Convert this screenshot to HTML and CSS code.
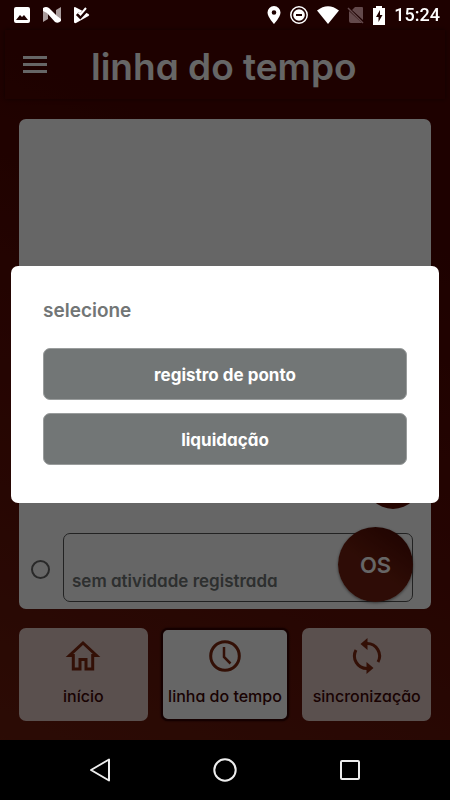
FILE: index.html
```html
<!DOCTYPE html>
<html lang="pt-BR">
<head>
<meta charset="utf-8">
<meta name="viewport" content="width=device-width, initial-scale=1">
<title>linha do tempo</title>
<link rel="stylesheet" href="styles.css">
</head>
<body>
<div class="status">
  <div class="status-group">
    <svg width="18" height="18" viewBox="0 0 18 18"><path fill="#fff" fill-rule="evenodd" d="M3 1h12q2 0 2 2v12q0 2-2 2H3q-2 0-2-2V3q0-2 2-2zM3 14h12l-4-5-2 2-2-2z"/></svg>
    <svg width="20" height="18" viewBox="0 0 20 18"><path fill="#a89b9b" d="M1 2v14l5-3V5zM19 1v14l-5-1V4z"/><path fill="#fff" d="M1 2q3-2 6 0l8 8 4 3v2q-3 3-6 1L5 7 1 5z"/></svg>
    <svg width="18" height="18" viewBox="0 0 18 18"><path fill="#fff" d="M1 2q0-1.500 1.500-.8L15.500 8q1.500 1 0 2L3 17q-2 .5-2-1z"/><path fill="none" stroke="#1c0000" stroke-width="4.500" d="M4.500 7.500l2.800 2.800L15 2"/><path fill="none" stroke="#fff" stroke-width="2" d="M5.500 6.500L7.500 8.500 13 2"/></svg>
  </div>
  <div class="status-group status-right">
    <svg width="14" height="18" viewBox="0 0 14 18"><path fill="#fff" fill-rule="evenodd" d="M7 0a6.500 6.500 0 0 1 6.500 6.500C13.500 11 7 18 7 18S.5 11 .5 6.500A6.500 6.500 0 0 1 7 0zm0 4.200a2.300 2.300 0 1 0 0 4.600 2.300 2.300 0 0 0 0-4.600z"/></svg>
    <svg width="20" height="18" viewBox="0 0 20 18"><circle cx="10" cy="9" r="8.200" fill="none" stroke="#fff" stroke-width="1.500"/><circle cx="10" cy="9" r="5.800" fill="#fff"/><path stroke="#1c0000" stroke-width="2" d="M7 9h6"/></svg>
    <svg width="22" height="18" viewBox="0 0 22 18"><path fill="#fff" d="M0 4.500Q11-4 22 4.500L11 18z"/></svg>
    <svg width="18" height="18" viewBox="0 0 18 18"><path fill="#63494b" d="M8 1h7q1 0 1 1v12L5 4zM2 5l13 12H4q-2 0-2-2z"/><path stroke="#63494b" stroke-width="1.500" d="M1 2l15 15"/></svg>
    <svg width="12" height="19" viewBox="0 0 12 19"><path fill="#fff" fill-rule="evenodd" d="M3 0h6v2h3v17H0V2h3zM7 4l-4 7h2.500v5l4-7H7z"/></svg>
    <span class="clock">15:24</span>
  </div>
</div>

<header class="topbar">
  <button class="menu" type="button" aria-label="menu"><span></span><span></span><span></span></button>
  <h1>linha do tempo</h1>
</header>

<main class="timeline">
  <span class="fab"></span>
  <div class="row">
    <input type="radio" id="entry" name="entry" class="dot">
    <label class="entry" for="entry">sem atividade registrada<span class="badge">OS</span></label>
  </div>
</main>

<nav class="tabs">
  <a class="tab" href="#inicio">
    <svg width="36" height="36" viewBox="0 0 36 36"><path fill="none" stroke="#802810" stroke-width="3" d="M4.500 17.500h3.800V31H15v-9.500h6V31h6.700V17.500h3.800L18 5z"/></svg>
    <span>início</span>
  </a>
  <a class="tab tab-active" href="#linha">
    <svg width="36" height="36" viewBox="0 0 36 36"><circle cx="18" cy="18" r="14.300" fill="none" stroke="#802810" stroke-width="3"/><path fill="none" stroke="#802810" stroke-width="2.500" d="M17 9v10l6.500 6.500"/></svg>
    <span>linha do tempo</span>
  </a>
  <a class="tab" href="#sincronizacao">
    <svg width="36" height="36" viewBox="0 0 36 36"><g fill="none" stroke="#802810" stroke-width="3"><path d="M18 5.500A12.500 12.500 0 0 1 29 24"/><path d="M18 30.500A12.500 12.500 0 0 1 7 12"/></g><path fill="#802810" d="M18.500 0v12l-7-6zM17.500 24v12l7-6z"/></svg>
    <span>sincronização</span>
  </a>
</nav>

<div class="sysbar">
  <button type="button" aria-label="voltar"><svg width="26" height="26" viewBox="0 0 26 26"><path d="M22 2.500v21L4 13z"/></svg></button>
  <button type="button" aria-label="tela inicial"><svg width="26" height="26" viewBox="0 0 26 26"><circle cx="13" cy="13" r="10.700"/></svg></button>
  <button type="button" aria-label="recentes"><svg width="26" height="26" viewBox="0 0 26 26"><rect x="4" y="4" width="18" height="18" rx="1"/></svg></button>
</div>

<div class="overlay">
  <section class="dialog" role="dialog" aria-labelledby="dialog-title">
    <h2 id="dialog-title">selecione</h2>
    <button class="choice" type="button">registro de ponto</button>
    <button class="choice" type="button">liquidação</button>
  </section>
</div>
</body>
</html>
```
FILE: styles.css
```css
* { box-sizing: border-box; }

body {
  margin: 0;
  min-height: 100vh;
  display: flex;
  flex-direction: column;
  background: linear-gradient(25deg, #70200f 0%, #5f0e06 40%, #4c0400 75%);
  font-family: Inter, "Noto Sans", sans-serif;
  font-feature-settings: "cv11", "ss03";
}

button { font: inherit; font-feature-settings: inherit; border: 0; padding: 0; }
svg { display: block; overflow: visible; }

/* Icons stay bright above the dimmed page */
.status {
  position: relative;
  z-index: 3;
  height: 30px;
  padding: 0 10px 0 13px;
  display: flex;
  align-items: center;
  justify-content: space-between;
}
.status-group { display: flex; align-items: center; gap: 11px; }
.status-right { gap: 8px; }
.clock { margin-left: 1px; color: #fff; font: 500 18px/20px Roboto, sans-serif; }

.topbar {
  height: 69px;
  margin: 0 5px;
  padding: 4px 18px 0;
  display: flex;
  align-items: center;
  gap: 44px;
  box-shadow: 0 0 4px rgba(0, 0, 0, 0.5);
}
.menu {
  width: 24px;
  display: flex;
  flex-direction: column;
  gap: 4px;
  margin-bottom: 4px;
  background: none;
}
.menu span { height: 3px; background: #fff; }
h1 { margin: 0; color: #fff; font-size: 37px; font-weight: 600; line-height: 44px; white-space: nowrap; }

.timeline {
  flex: 1;
  margin: 20px 19px 19px;
  padding: 0 18px 7px 12px;
  border-radius: 7px;
  background: #fff;
  display: flex;
  flex-direction: column;
  justify-content: flex-end;
}
.fab {
  width: 56px;
  height: 56px;
  align-self: flex-end;
  margin: 0 -8px 24px 0;
  border-radius: 50%;
  background: #5c0e04;
}
.row { display: flex; align-items: center; gap: 13px; }
.dot {
  appearance: none;
  width: 19px;
  height: 19px;
  margin: 4px 0 0;
  border: 2px solid #666;
  border-radius: 50%;
}
.entry {
  position: relative;
  flex: 1;
  height: 69px;
  padding: 0 8px 9px;
  display: flex;
  align-items: flex-end;
  border: 1px solid #555;
  border-radius: 7px;
  color: #727676;
  font-size: 17px;
  font-weight: 600;
  line-height: 22px;
}
.badge {
  position: absolute;
  top: -7px;
  right: -1px;
  width: 75px;
  height: 75px;
  border-radius: 50%;
  background: linear-gradient(35deg, #74200f 45%, #480600);
  box-shadow: 0 1px 3px rgba(0, 0, 0, 0.5);
  color: #fff;
  font-size: 22px;
  line-height: 76px;
  text-align: center;
}

.tabs {
  margin: 0 19px 19px;
  display: grid;
  grid-template-columns: repeat(3, 1fr);
  gap: 13px;
}
.tab {
  height: 93px;
  padding-top: 10px;
  display: flex;
  flex-direction: column;
  align-items: center;
  gap: 11px;
  border-radius: 7px;
  background: #e1c7c3;
  color: #400606;
  font-size: 16px;
  font-weight: 500;
  line-height: 22px;
  text-decoration: none;
  white-space: nowrap;
}
.tab-active { border: 2px solid #360000; padding-top: 8px; background: #fff; box-shadow: 0 0 2px #200000; }

.sysbar {
  height: 60px;
  padding: 0 38px;
  display: grid;
  grid-template-columns: repeat(3, 1fr);
  justify-items: center;
  align-items: center;
  position: relative;
  z-index: 3;
  background: #000;
}
.sysbar button { background: none; }
.sysbar svg { fill: none; stroke: #eee; stroke-width: 2; stroke-linejoin: round; }

.overlay {
  position: fixed;
  inset: 0;
  z-index: 2;
  padding: 0 11px 31px;
  display: flex;
  align-items: center;
  background: rgba(0, 0, 0, 0.6);
}
.dialog {
  flex: 1;
  padding: 31px 32px 38px;
  display: flex;
  flex-direction: column;
  gap: 13px;
  border-radius: 7px;
  background: #fff;
}
h2 { margin: 0 0 10px; color: #727676; font-size: 19px; font-weight: 600; line-height: 28px; }
.choice {
  height: 52px;
  padding-top: 2px;
  border: 1px solid #999c9c;
  border-radius: 7px;
  background: #727676;
  color: #fff;
  font-size: 17px;
  font-weight: 700;
}
```
